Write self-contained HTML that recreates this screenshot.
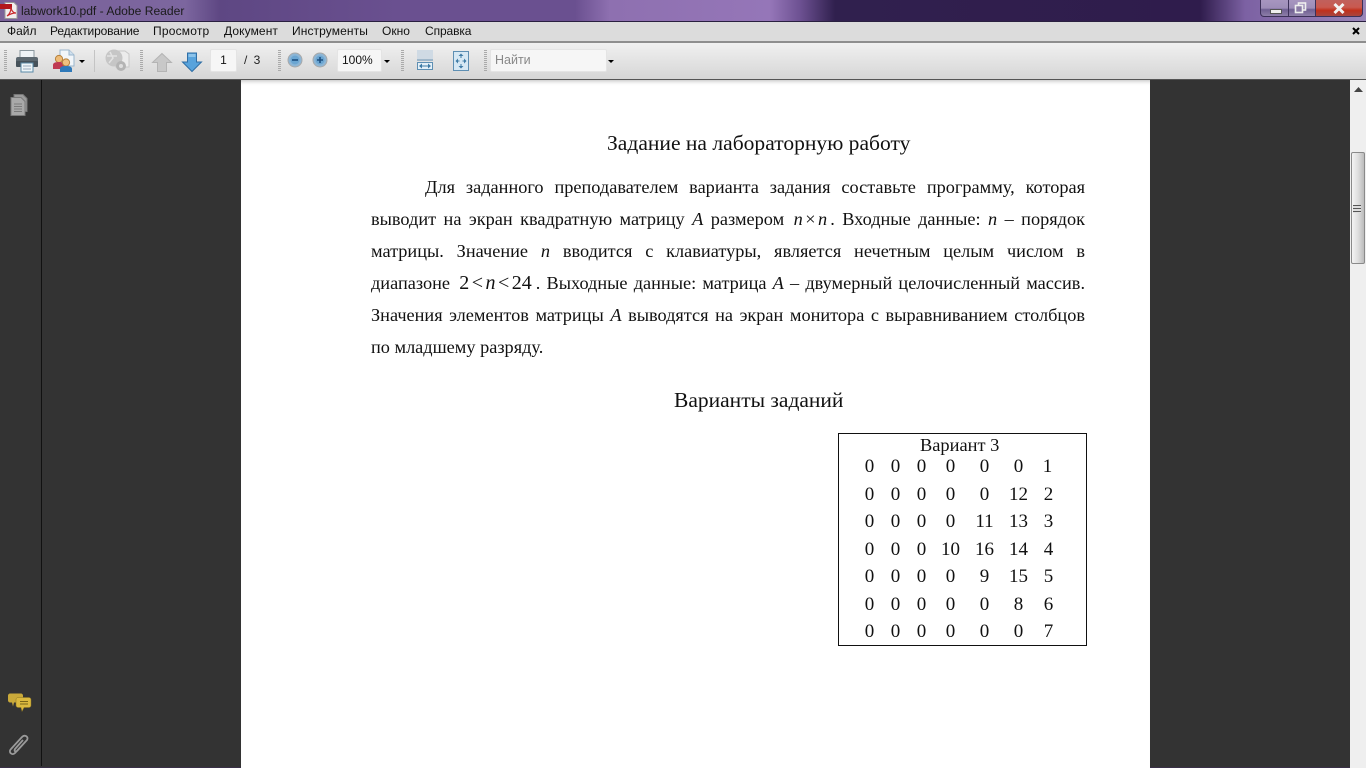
<!DOCTYPE html>
<html lang="ru">
<head>
<meta charset="utf-8">
<title>labwork10.pdf - Adobe Reader</title>
<style>
html,body{margin:0;padding:0;width:1366px;height:768px;overflow:hidden;background:#333}
body{position:relative;font-family:"Liberation Sans","DejaVu Sans",sans-serif}
.a{position:absolute}
#title{left:0;top:0;width:1366px;height:21px;background:linear-gradient(90deg,#7a6299 0,#7c669f 185px,#5e4783 220px,#6a5090 400px,#6a5090 575px,#8e70b0 610px,#9576b8 770px,#6d5192 800px,#30204e 835px,#2f1c4c 1200px,#7c61a3 1245px,#9a86b8 1366px);border-bottom:1px solid #2a2040}
#ttxt{left:21px;top:2px;font-size:12.100px;line-height:18px;color:#1b1b1b;white-space:nowrap}
#menu{left:0;top:22px;width:1366px;height:19px;background:#dcdcdc;border-bottom:2px solid #8e8e8e}
.m{position:absolute;top:22px;font-size:12px;line-height:18px;color:#111;white-space:nowrap}
#tool{left:0;top:43px;width:1366px;height:36px;background:linear-gradient(#f0f0f0,#d6d6d6);border-bottom:1px solid #555}
.grip{position:absolute;top:50px;width:3px;height:22px;background:repeating-linear-gradient(#aaa 0 1px,transparent 1px 2px)}
.inp{position:absolute;background:#f6f6f6;border:1px solid #e4e4e4;box-sizing:border-box;font-size:12px;color:#111;border-radius:2px}
.dd{position:absolute;width:0;height:0;border-left:3px solid transparent;border-right:3px solid transparent;border-top:3px solid #000;top:60px}
#side{left:41px;top:80px;width:1px;height:686px;background:#111}
#page{left:241px;top:80px;width:909px;height:688px;background:#fff;box-shadow:inset 0 5px 4px -4px #bbb}
#sb{left:1350px;top:80px;width:16px;height:688px;background:#efefef}
#th{left:1351px;top:152px;width:14px;height:112px;box-sizing:border-box;border:1px solid #8a8a8a;border-radius:2px;background:linear-gradient(90deg,#f4f4f4,#dedede 50%,#bcbcbc)}
.t{position:absolute;font-family:"Liberation Serif",serif;color:#111;white-space:nowrap}
.l{position:absolute;font-family:"Liberation Serif",serif;color:#111;font-size:18.300px;line-height:24px;text-align:justify;text-align-last:justify}
.n{position:absolute;font-family:"Liberation Serif",serif;color:#111;font-size:19px;line-height:22px;width:40px;text-align:center;margin-left:-.5px}
#box{left:838px;top:433px;width:247px;height:211px;border:1px solid #111}
#bot{left:0;top:767px;width:241px;height:1px;background:#3a3048}
#bot2{left:1150px;top:767px;width:200px;height:1px;background:#3a3048}
svg{position:absolute;overflow:visible}
</style>
</head>
<body>
<div id="title" class="a"></div>
<svg style="left:3px;top:2px" width="16" height="17" viewBox="0 0 16 17"><path d="M2 .5h9l3 3v13H2z" fill="#f3eeee" stroke="#999"/><rect x="-3" y="2" width="12" height="5" fill="#b3161c"/><path d="M4 14c3-2 4-6 4-9 0 3 2 6 5 6-3 0-6 1-9 3z" fill="none" stroke="#c8282c" stroke-width="1.2"/></svg>
<div id="ttxt" class="a">labwork10.pdf - Adobe Reader</div>
<div class="a" style="left:1260px;top:0;width:103px;height:17px;border:1px solid #3c3058;border-top:0;border-radius:0 0 4px 4px;box-sizing:border-box;background:linear-gradient(#a796bf 0,#9d8db8 50%,#6f5f92 60%,#8d7ea8)"></div>
<div class="a" style="left:1315px;top:0;width:48px;height:17px;border:1px solid #3c3058;border-top:0;border-radius:0 0 4px 0;box-sizing:border-box;background:linear-gradient(#c0605c 0,#c95a50 45%,#c0301c 65%,#a8463f)"></div>
<div class="a" style="left:1288px;top:0;width:1px;height:16px;background:#3c3058"></div>
<div class="a" style="left:1270px;top:9px;width:10px;height:3px;background:#eee;border:1px solid #555"></div>
<svg style="left:1294px;top:2px" width="13" height="12" viewBox="0 0 13 12"><rect x="4.5" y="1" width="7" height="7" fill="none" stroke="#eee" stroke-width="1.6"/><rect x="1.5" y="3.5" width="7" height="7" fill="#8a7ba6" stroke="#eee" stroke-width="1.6"/></svg>
<svg style="left:1333px;top:3px" width="12" height="11" viewBox="0 0 12 11"><path d="M1.5 1l9 9M10.500 1l-9 9" stroke="#f2f2f2" stroke-width="3"/></svg>

<div id="menu" class="a"></div>
<div class="m" style="left:7px">Файл</div>
<div class="m" style="left:50px;letter-spacing:-.15px">Редактирование</div>
<div class="m" style="left:153px;letter-spacing:.2px">Просмотр</div>
<div class="m" style="left:224px;letter-spacing:.1px">Документ</div>
<div class="m" style="left:292px;letter-spacing:.1px">Инструменты</div>
<div class="m" style="left:382px">Окно</div>
<div class="m" style="left:425px;letter-spacing:-.1px">Справка</div>
<svg style="left:1352px;top:27px" width="8" height="8" viewBox="0 0 8 8"><path d="M1 1l6 6M7 1L1 7" stroke="#000" stroke-width="2"/></svg>

<div id="tool" class="a"></div>
<div class="grip" style="left:4px"></div>
<svg style="left:15px;top:49px" width="24" height="24" viewBox="0 0 24 24"><rect x="5" y="1.5" width="14" height="8" fill="#eef3f6" stroke="#8a979e"/><rect x="1" y="8" width="22" height="10" rx="2" fill="#5c6870"/><rect x="1" y="12" width="22" height="6" rx="1" fill="#46525a"/><rect x="6" y="14" width="12" height="9" fill="#eef5f8" stroke="#5a8aa8"/><path d="M8 17h8M8 20h8" stroke="#9ab"/></svg>
<svg style="left:52px;top:49px" width="24" height="24" viewBox="0 0 24 24"><path d="M8 1h9l5 5v11H8z" fill="#f2f6fa" stroke="#9ab5cc"/><path d="M17 1v5h5" fill="#cfe0ee" stroke="#9ab5cc"/><circle cx="7" cy="10" r="3.6" fill="#eebb77" stroke="#b5803c"/><path d="M1 20v-4c0-2 2-3 6-3s6 1 6 3v4z" fill="#bf3a52"/><circle cx="14" cy="13.500" r="3.600" fill="#f0c080" stroke="#b5803c"/><path d="M8 23v-3c0-2 2-3 6-3s6 1 6 3v3z" fill="#2f79b9"/></svg>
<div class="dd" style="left:79px"></div>
<div class="a" style="left:94px;top:50px;width:1px;height:22px;background:#c4c4c4"></div>
<svg style="left:104px;top:49px" width="26" height="24" viewBox="0 0 26 24"><path d="M12 2h9l4 3v13H12z" fill="#ececec" stroke="#c8c8c8"/><circle cx="10" cy="9" r="8.500" fill="#c6c6c6"/><path d="M3 7h10M6 3l3 6-4 5" stroke="#e2e2e2" fill="none" stroke-width="1.500"/><circle cx="17" cy="17" r="5" fill="#b4b4b4"/><circle cx="17" cy="17" r="2" fill="#dedede"/></svg>
<div class="grip" style="left:140px"></div>
<svg style="left:152px;top:53px" width="20" height="19" viewBox="0 0 20 19"><path d="M10 .5L19.500 9.500H14.500V18.500H5.500V9.500H.5z" fill="#c8c8c8" stroke="#b4b4b4"/></svg>
<svg style="left:182px;top:52px" width="20" height="20" viewBox="0 0 20 20"><path d="M5.500 1H14.500V10H19.500L10 19.500.5 10H5.500z" fill="#58a3dc" stroke="#2f6ea5"/><path d="M6.500 2h7v3h-7z" fill="#8cc3ea"/></svg>
<div class="inp" style="left:210px;top:49px;width:27px;height:23px;text-align:center;line-height:21px">1</div>
<div class="a" style="left:244px;top:52px;font-size:12px;line-height:16px;color:#222;word-spacing:3px">/ 3</div>
<div class="grip" style="left:278px"></div>
<svg style="left:287px;top:52px" width="16" height="16" viewBox="0 0 16 16"><circle cx="8" cy="8" r="7" fill="#8db6d6" stroke="#a9a9a9"/><circle cx="8" cy="8" r="4.500" fill="#6ba6d2"/><rect x="5" y="7.200" width="6" height="1.600" fill="#1d4f80"/></svg>
<svg style="left:312px;top:52px" width="16" height="16" viewBox="0 0 16 16"><circle cx="8" cy="8" r="7" fill="#8db6d6" stroke="#a9a9a9"/><circle cx="8" cy="8" r="4.500" fill="#6ba6d2"/><path d="M5 8h6M8 5v6" stroke="#1d4f80" stroke-width="1.600"/></svg>
<div class="inp" style="left:337px;top:49px;width:45px;height:23px;line-height:20px;padding-left:4px">100%</div>
<div class="dd" style="left:384px"></div>
<div class="grip" style="left:401px"></div>
<svg style="left:417px;top:50px" width="16" height="20" viewBox="0 0 16 20"><rect x="0" y="0" width="16" height="9" fill="#cfdae4"/><rect x="0" y="9" width="16" height="2" fill="#9fb7ca"/><rect x=".5" y="12.500" width="15" height="7" fill="#e4f0f8" stroke="#5e8fb3"/><path d="M3 16h10" stroke="#3f7ba6"/><path d="M2 16l3-2.500v5zM14 16l-3-2.500v5z" fill="#3f7ba6"/></svg>
<svg style="left:453px;top:51px" width="16" height="20" viewBox="0 0 16 20"><rect x=".5" y=".5" width="15" height="19" fill="#d6e8f4" stroke="#5e8fb3"/><path d="M8 2.500l2.500 2.500h-5zM8 17.500l2.500-2.500h-5zM2.500 10L5 7.500v5zM13.500 10L11 7.500v5z" fill="#3f7ba6"/><path d="M8 5v2M8 13v2M5 10h1.500M9.500 10H11" stroke="#3f7ba6"/></svg>
<div class="grip" style="left:484px"></div>
<div class="inp" style="left:490px;top:49px;width:117px;height:23px;line-height:21px;padding-left:4px;color:#888;font-size:12.500px">Найти</div>
<div class="dd" style="left:608px"></div>

<div id="page" class="a"></div>
<div id="side" class="a"></div>
<div id="sb" class="a"></div>
<svg style="left:1354px;top:87px" width="9" height="5" viewBox="0 0 9 5"><path d="M4.500 0L9 5H0z" fill="#444"/></svg>
<div id="th" class="a"></div>
<div class="a" style="left:1353px;top:205px;width:8px;height:8px;background:repeating-linear-gradient(#555 0 1px,#ddd 1px 3px)"></div>

<svg style="left:10px;top:94px" width="18" height="22" viewBox="0 0 18 22"><path d="M4 .5h9l4 4v13H4z" fill="#9a9a9a" stroke="#777"/><path d="M1 3.500h10l4 4v14H1z" fill="#a9a9a9" stroke="#7a7a7a"/><path d="M4 10h8M4 12.500h8M4 15h8M4 17.500h8" stroke="#7a7a7a"/></svg>
<svg style="left:8px;top:693px" width="23" height="19" viewBox="0 0 23 19"><path d="M2 .5h11c1 0 2 1 2 2v5c0 1-1 2-2 2H6l-1 4-1-4H2c-1 0-2-1-2-2v-5c0-1 1-2 2-2z" fill="#c9a93a"/><path d="M10 4.500h11c1 0 2 1 2 2v6c0 1-1 2-2 2h-5l-2 4-1-4h-3c-1 0-2-1-2-2v-6c0-1 1-2 2-2z" fill="#dbb93f" stroke="#8a7322" stroke-width=".5"/><path d="M12 8.500h8M12 11h8" stroke="#7a6518"/></svg>
<svg style="left:8px;top:734px" width="22" height="24" viewBox="0 0 22 24"><path d="M19 6L7 19c-3 3-7-1-4-4L14 3c3-3 7 0 5 3L9 17c-2 1-3 0-2-2l8-9" fill="none" stroke="#9a9a9a" stroke-width="1.800"/></svg>

<div class="t" style="left:607px;top:130px;font-size:21.550px;line-height:26px">Задание на лабораторную работу</div>
<div class="l" style="left:425px;top:175px;width:660px">Для заданного преподавателем варианта задания составьте программу, которая</div>
<div class="l" style="left:371px;top:207px;width:714px">выводит на экран квадратную матрицу <i>A</i> размером <i style="margin-left:2px">n</i><span style="margin:0 2.500px">×</span><i>n</i><span style="margin-left:3px">.</span> Входные данные: <i>n</i> – порядок</div>
<div class="l" style="left:371px;top:239px;width:714px">матрицы. Значение <i>n</i> вводится с клавиатуры, является нечетным целым числом в</div>
<div class="l" style="left:371px;top:271px;width:714px">диапазоне <span style="font-size:20px;margin-left:3px">2<span style="margin:0 2.500px">&lt;</span><i>n</i><span style="margin:0 2.500px">&lt;</span>24</span><span style="margin-left:4px">.</span> Выходные данные: матрица <i>A</i> – двумерный целочисленный массив.</div>
<div class="l" style="left:371px;top:303px;width:714px">Значения элементов матрицы <i>A</i> выводятся на экран монитора с выравниванием столбцов</div>
<div class="t" style="left:371px;top:335px;font-size:18.300px;line-height:24px">по младшему разряду.</div>
<div class="t" style="left:674px;top:387px;font-size:21.500px;line-height:26px">Варианты заданий</div>

<div id="box" class="a"></div>
<div class="t" style="left:920px;top:434px;font-size:18.400px;line-height:22px">Вариант 3</div>

<div class="n" style="left:850px;top:456px">0</div><div class="n" style="left:876px;top:456px">0</div><div class="n" style="left:902px;top:456px">0</div><div class="n" style="left:931px;top:456px">0</div><div class="n" style="left:965px;top:456px">0</div><div class="n" style="left:999px;top:456px">0</div><div class="n" style="left:1028px;top:456px">1</div>
<div class="n" style="left:850px;top:484px">0</div><div class="n" style="left:876px;top:484px">0</div><div class="n" style="left:902px;top:484px">0</div><div class="n" style="left:931px;top:484px">0</div><div class="n" style="left:965px;top:484px">0</div><div class="n" style="left:999px;top:484px">12</div><div class="n" style="left:1029px;top:484px">2</div>
<div class="n" style="left:850px;top:511px">0</div><div class="n" style="left:876px;top:511px">0</div><div class="n" style="left:902px;top:511px">0</div><div class="n" style="left:931px;top:511px">0</div><div class="n" style="left:965px;top:511px">11</div><div class="n" style="left:999px;top:511px">13</div><div class="n" style="left:1029px;top:511px">3</div>
<div class="n" style="left:850px;top:539px">0</div><div class="n" style="left:876px;top:539px">0</div><div class="n" style="left:902px;top:539px">0</div><div class="n" style="left:931px;top:539px">10</div><div class="n" style="left:965px;top:539px">16</div><div class="n" style="left:999px;top:539px">14</div><div class="n" style="left:1029px;top:539px">4</div>
<div class="n" style="left:850px;top:566px">0</div><div class="n" style="left:876px;top:566px">0</div><div class="n" style="left:902px;top:566px">0</div><div class="n" style="left:931px;top:566px">0</div><div class="n" style="left:965px;top:566px">9</div><div class="n" style="left:999px;top:566px">15</div><div class="n" style="left:1029px;top:566px">5</div>
<div class="n" style="left:850px;top:594px">0</div><div class="n" style="left:876px;top:594px">0</div><div class="n" style="left:902px;top:594px">0</div><div class="n" style="left:931px;top:594px">0</div><div class="n" style="left:965px;top:594px">0</div><div class="n" style="left:999px;top:594px">8</div><div class="n" style="left:1029px;top:594px">6</div>
<div class="n" style="left:850px;top:621px">0</div><div class="n" style="left:876px;top:621px">0</div><div class="n" style="left:902px;top:621px">0</div><div class="n" style="left:931px;top:621px">0</div><div class="n" style="left:965px;top:621px">0</div><div class="n" style="left:999px;top:621px">0</div><div class="n" style="left:1029px;top:621px">7</div>

<div id="bot" class="a"></div>
<div id="bot2" class="a"></div>
</body>
</html>
